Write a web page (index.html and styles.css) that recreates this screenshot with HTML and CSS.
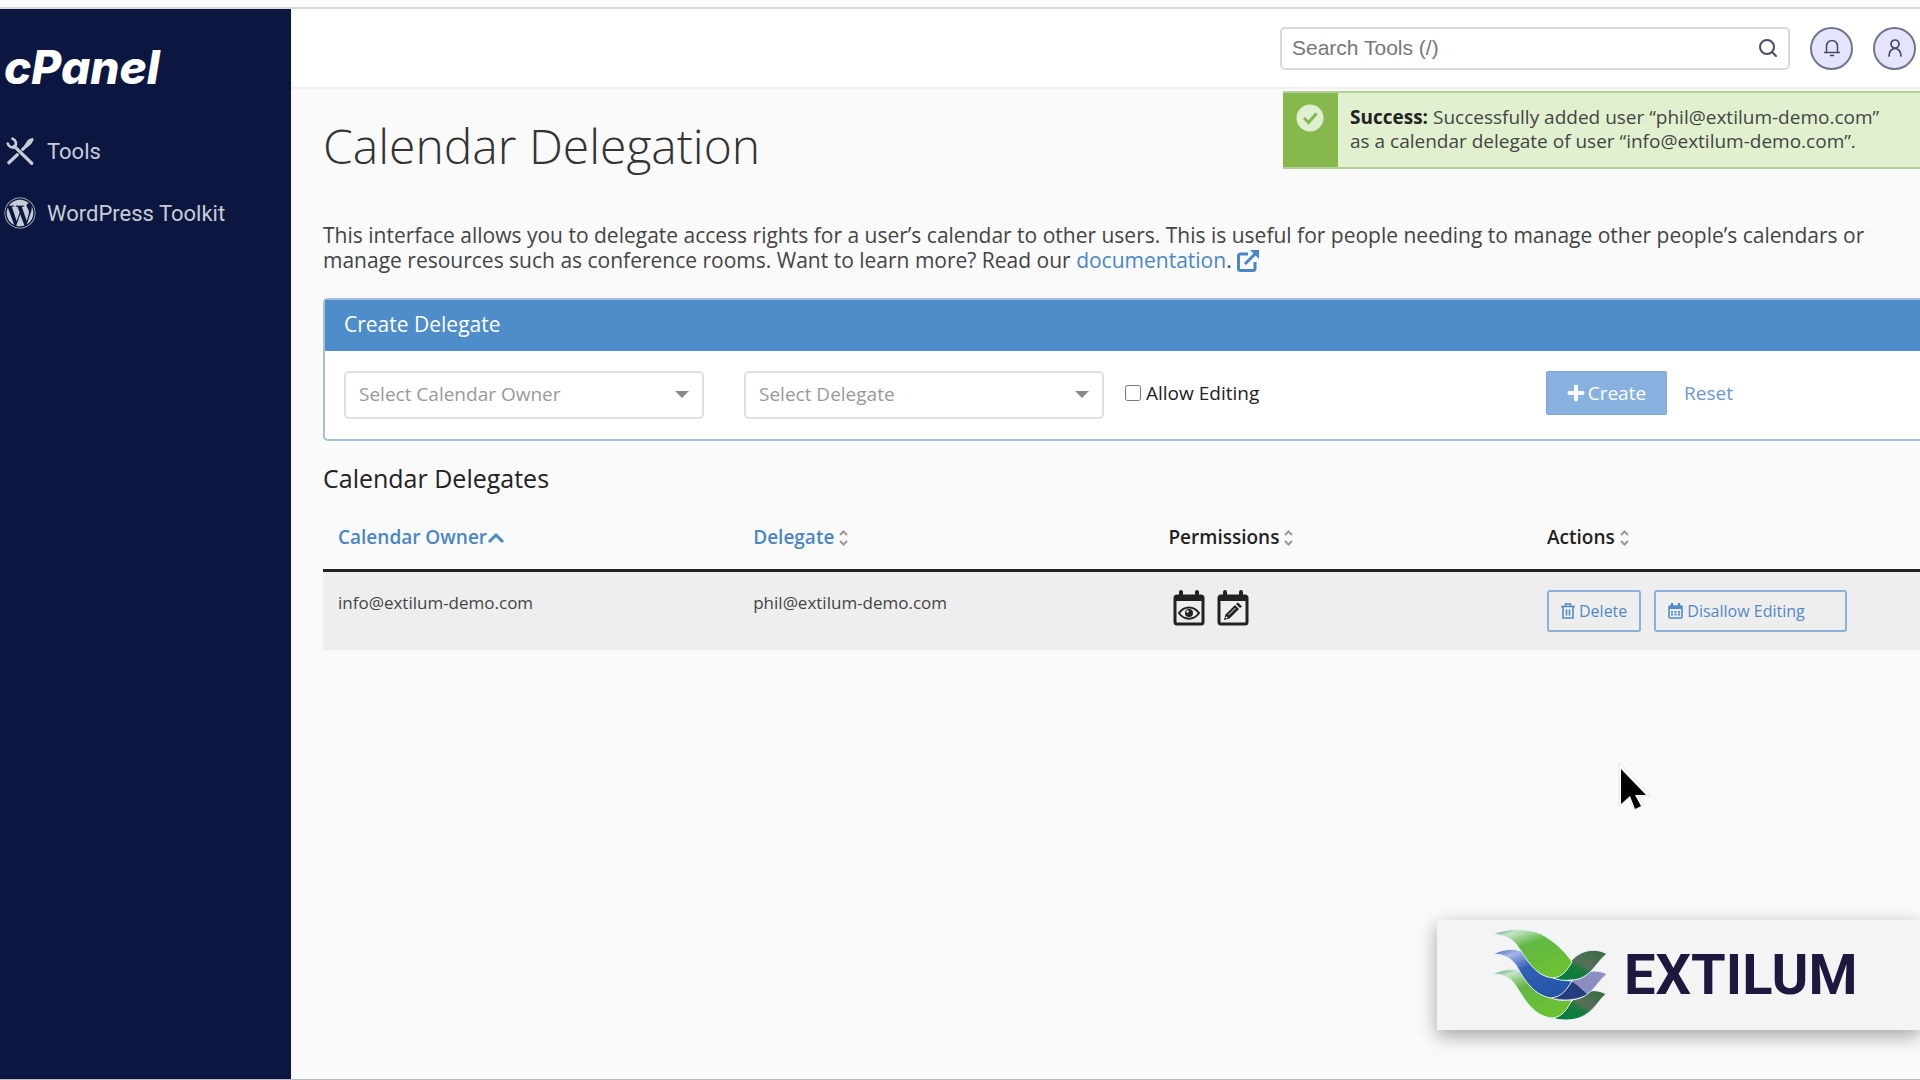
FILE: index.html
```html
<!DOCTYPE html>
<html lang="en">
  <head>
    <meta charset="utf-8" />
    <title>cPanel - Calendar Delegation</title>
    <link rel="stylesheet" href="styles.css">
  </head>

  <body>
    <div class="top-strip"></div>

    <div class="layout">
      <nav class="sidebar">
        <a href="#" class="logo">cPanel</a>
        <a href="#" class="nav-link">
          <svg class="nav-icon" viewBox="0 0 30 30" fill="none" stroke="currentColor" stroke-width="3" stroke-linecap="round">
            <path d="M9.500 10.500L26 26.500M4.500 26L12.500 18.500M17.500 13.500L21 10" />
            <path d="M8 3.500A5 5 0 0 1 10 11.500A5 5 0 0 1 3.500 8" stroke-width="2.500" />
            <path d="M20 9.500L23 5L26.500 3.500L27 4.500L25 8L21.500 11Z" fill="currentColor" stroke-width="1.500" />
          </svg>
          Tools
        </a>
        <a href="#" class="nav-link">
          <svg class="nav-icon" viewBox="0 0 512 512" fill="currentColor">
            <path d="M61.700 169.400l101.500 278C92.200 413 43.300 340.200 43.300 256c0-30.900 6.600-60.100 18.400-86.600zm337.900 75.900c0-26.300-9.400-44.500-17.500-58.700-10.800-17.500-20.900-32.400-20.900-49.900 0-19.600 14.800-37.800 35.700-37.800.9 0 1.800.1 2.800.2-37.900-34.700-88.300-55.900-143.700-55.900-74.300 0-139.700 38.100-177.800 95.900 5 .2 9.700.3 13.700.3 22.200 0 56.700-2.700 56.700-2.700 11.500-.7 12.800 16.200 1.400 17.500 0 0-11.500 1.300-24.300 2l77.500 230.400L249.800 247l-33.100-90.800c-11.500-.7-22.300-2-22.300-2-11.500-.7-10.100-18.200 1.300-17.500 0 0 35.100 2.700 56 2.700 22.200 0 56.700-2.700 56.700-2.700 11.500-.7 12.800 16.200 1.400 17.500 0 0-11.500 1.300-24.300 2l76.900 228.700 21.200-70.900c9-29.400 16-50.500 16-68.700zm-139.900 29.300l-63.800 185.500c19.100 5.600 39.200 8.700 60.100 8.700 24.800 0 48.500-4.300 70.600-12.100-.6-.9-1.100-1.900-1.500-2.900l-65.400-179.200zm183-120.700c.9 6.800 1.400 14 1.400 21.900 0 21.600-4 45.800-16.200 76.200l-65 187.900C426.200 403 468.700 334.500 468.700 256c0-37-9.400-71.800-26-102.100zM504 256c0 136.800-111.300 248-248 248C119.200 504 8 392.700 8 256 8 119.200 119.200 8 256 8c136.700 0 248 111.200 248 248zm-11.400 0c0-130.500-106.200-236.600-236.600-236.600C125.500 19.400 19.400 125.500 19.400 256S125.600 492.600 256 492.600c130.500 0 236.600-106.100 236.600-236.600z" />
          </svg>
          WordPress Toolkit
        </a>
      </nav>

      <div class="content">
        <header class="topbar">
          <div class="search-box">
            <input type="text" class="search-input" placeholder="Search Tools (/)" aria-label="Search Tools">
            <button type="button" class="search-button" aria-label="Search">
              <svg width="20" height="20" viewBox="0 0 20 20" fill="none" stroke="currentColor" stroke-width="2">
                <circle cx="9" cy="9" r="7" />
                <path d="M14 14L18 18" stroke-linecap="round" />
              </svg>
            </button>
          </div>
          <button type="button" class="round-button" aria-label="Notifications">
            <svg width="20" height="20" viewBox="0 0 20 20" fill="none" stroke="currentColor" stroke-width="1.500" stroke-linecap="round" stroke-linejoin="round">
              <path d="M2.500 14.500H17.500M4.500 14.500V8A5.500 5.500 0 0 1 15.500 8V14.500M8.500 17.500H11.500" />
            </svg>
          </button>
          <button type="button" class="round-button" aria-label="Account">
            <svg width="20" height="20" viewBox="0 0 20 20" fill="none" stroke="currentColor" stroke-width="1.700" stroke-linecap="round">
              <circle cx="10" cy="6" r="4" />
              <path d="M4 18C4 13 7 10.500 10 10.500S16 13 16 18" />
            </svg>
          </button>
        </header>

        <div class="alert" role="status">
          <div class="alert-icon">
            <svg width="28" height="28" viewBox="0 0 28 28">
              <circle cx="14" cy="14" r="13.500" fill="#dff0d0" />
              <path d="M8 14L12.500 18.500L20.500 9.500" fill="none" stroke="#86b84e" stroke-width="3" />
            </svg>
          </div>
          <div class="alert-text"><strong>Success:</strong> Successfully added user “phil@extilum-demo.com”<br>as a calendar delegate of user “info@extilum-demo.com”.</div>
        </div>

        <main class="main">
          <h1>Calendar Delegation</h1>
          <p class="intro">
            This interface allows you to delegate access rights for a user’s calendar to other users. This is useful for people needing to manage other people’s calendars or manage resources such as conference rooms. Want to learn more? Read our <a href="#">documentation</a>.
            <a href="#" aria-label="Open documentation"><svg class="external-icon" viewBox="0 0 22 22" fill="none" stroke="currentColor" stroke-width="3">
              <path d="M11 4H3.500A2 2 0 0 0 1.500 6V18.500A2 2 0 0 0 3.500 20.500H16A2 2 0 0 0 18 18.500V12M8 14L19 3" />
              <path d="M13 0H22V9Z" fill="currentColor" stroke="none" />
            </svg></a>
          </p>

          <section class="panel">
            <div class="panel-heading">Create Delegate</div>
            <form class="panel-body">
              <div class="select-wrap">
                <select aria-label="Calendar owner">
                  <option>Select Calendar Owner</option>
                </select>
              </div>
              <div class="select-wrap">
                <select aria-label="Delegate">
                  <option>Select Delegate</option>
                </select>
              </div>
              <div class="check-group">
                <input type="checkbox" id="allow-editing">
                <label for="allow-editing">Allow Editing</label>
              </div>
              <div class="form-buttons">
                <button type="button" class="btn-create">
                  <svg width="18" height="18" viewBox="0 0 18 18" fill="none" stroke="currentColor" stroke-width="4" stroke-linecap="round">
                    <path d="M9 2.500V15.500M2.500 9H15.500" />
                  </svg>
                  Create
                </button>
                <button type="reset" class="btn-reset">Reset</button>
              </div>
            </form>
          </section>

          <h2>Calendar Delegates</h2>
          <table class="delegates">
            <thead>
              <tr>
                <th class="col-owner"><a href="#">Calendar Owner<svg class="sort-asc" viewBox="0 0 18 12" fill="none" stroke="currentColor" stroke-width="3"><path d="M2 10L9 3L16 10" /></svg></a></th>
                <th class="col-delegate"><a href="#">Delegate</a><svg class="sort" viewBox="0 0 9 16"><path d="M1 5L4.500 1.500L8 5M1 11L4.500 14.500L8 11" /></svg></th>
                <th>Permissions<svg class="sort" viewBox="0 0 9 16"><path d="M1 5L4.500 1.500L8 5M1 11L4.500 14.500L8 11" /></svg></th>
                <th class="col-actions">Actions<svg class="sort" viewBox="0 0 9 16"><path d="M1 5L4.500 1.500L8 5M1 11L4.500 14.500L8 11" /></svg></th>
              </tr>
            </thead>
            <tbody>
              <tr>
                <td>info@extilum-demo.com</td>
                <td>phil@extilum-demo.com</td>
                <td>
                  <div class="permissions">
                    <svg width="32" height="36" viewBox="0 0 32 36">
                      <path d="M8 2V7M24 2V7" stroke="#222" stroke-width="4" stroke-linecap="round" />
                      <rect x="2" y="6" width="28" height="28" rx="2" fill="none" stroke="#222" stroke-width="3" />
                      <path d="M2 5H30V11H2Z" fill="#222" />
                      <path d="M6 23C11 15.500 21 15.500 26 23C21 30.500 11 30.500 6 23Z" fill="none" stroke="#222" stroke-width="2" />
                      <circle cx="16" cy="23" r="4" fill="#222" />
                      <circle cx="14.500" cy="21.500" r="1.200" fill="#eee" />
                    </svg>
                    <svg width="32" height="36" viewBox="0 0 32 36">
                      <path d="M8 2V7M24 2V7" stroke="#222" stroke-width="4" stroke-linecap="round" />
                      <rect x="2" y="6" width="28" height="28" rx="2" fill="none" stroke="#222" stroke-width="3" />
                      <path d="M2 5H30V11H2Z" fill="#222" />
                      <path d="M7 30L8.500 24.500L18 15L22 19L12.500 28.500Z" fill="#222" />
                      <path d="M19 14L21 12.500L25 16.500L23 18Z" fill="#222" />
                      <path d="M11.500 25L18.500 18" stroke="#eee" stroke-width="1" />
                      <circle cx="9.500" cy="27.500" r="1" fill="#eee" />
                    </svg>
                  </div>
                </td>
                <td>
                  <div class="actions">
                    <button type="button" class="btn-outline">
                      <svg width="14" height="16" viewBox="0 0 14 16" fill="none" stroke="currentColor" stroke-width="1.600">
                        <path d="M0 3.500H14M4.500 3V1H9.500V3M2 4V15H12V4M5.500 6.500V12.500M8.500 6.500V12.500" />
                      </svg>
                      Delete
                    </button>
                    <button type="button" class="btn-outline btn-wide">
                      <svg width="15" height="16" viewBox="0 0 15 16" fill="none" stroke="currentColor" stroke-width="1.600">
                        <path d="M4 0V4M11 0V4" stroke-width="2.200" />
                        <rect x="1" y="3" width="13" height="12" rx="1" />
                        <path d="M1 4.500H14" stroke-width="3" />
                        <path d="M3 8.800H12M3 11.500H12" stroke-width="1.800" stroke-dasharray="2 1.500" />
                      </svg>
                      Disallow Editing
                    </button>
                  </div>
                </td>
              </tr>
            </tbody>
          </table>
        </main>
      </div>
    </div>

    <div class="brand">
      <svg width="114" height="92" viewBox="0 0 114 92">
        <defs>
          <linearGradient id="leaf" x1="0" y1="0" x2="0.600" y2="1">
            <stop offset="0" stop-color="#4f9568" />
            <stop offset="0.160" stop-color="#c5e4c8" />
            <stop offset="0.420" stop-color="#62b845" />
            <stop offset="1" stop-color="#6cc230" />
          </linearGradient>
          <linearGradient id="wave" x1="0" y1="0" x2="0.700" y2="1">
            <stop offset="0" stop-color="#3d62b0" />
            <stop offset="0.180" stop-color="#a5b6ea" />
            <stop offset="0.450" stop-color="#315fb5" />
            <stop offset="1" stop-color="#2455a6" />
          </linearGradient>
          <linearGradient id="leaf-dark" x1="0" y1="1" x2="1" y2="0">
            <stop offset="0" stop-color="#008040" />
            <stop offset="0.420" stop-color="#187a3c" />
            <stop offset="0.560" stop-color="#58705a" />
            <stop offset="1" stop-color="#346a3c" />
          </linearGradient>
        </defs>
        <g stroke="#e6f2f4" stroke-width="1">
          <path d="M59 89C70 86 72 78 79 72C89 61 103 59 113 65C104 72 98 91 73 91C67 91 63 90 59 89Z" fill="url(#leaf-dark)" />
          <path d="M0 45C12 39 26 39 38 46C52 55 60 71 79 71C74 80 70 88 59 89C38 87 29 65 21 54C16 48 9 45 0 45Z" fill="url(#leaf)" />
          <path d="M58 69C70 66 72 57 79 52C89 41 103 40 114 45C104 52 98 71 76 71C69 72 63 71 58 69Z" fill="#8c8dc1" />
          <path d="M59 69C70 66 73 58 79 53C84 55 89 61 94 65C84 71 71 71 59 69Z" fill="#253d7c" stroke="none" />
          <path d="M0 25C12 19 25 19 35 25C46 38 55 51 79 52C74 60 69 68 58 69C39 66 30 48 23 36C17 28 9 25 0 25Z" fill="url(#wave)" />
          <path d="M60 49C71 46 73 37 79 31C89 20 104 19 114 25C104 31 98 51 78 51C71 52 65 51 60 49Z" fill="url(#leaf-dark)" />
          <path d="M0 5C15 -1 34 -1 48 5C61 12 72 22 79 33C74 41 70 48 60 49C40 47 32 26 23 15C17 8 9 6 0 5Z" fill="url(#leaf)" />
        </g>
      </svg>
      <span class="brand-name">EXTILUM</span>
    </div>

    <svg class="cursor" width="36" height="52" viewBox="0 0 36 52">
      <path d="M2 2V47L12 38L17 50L27 45L21 36H34Z" fill="#fff" stroke="#e4e4e4" stroke-width="1" />
      <path d="M4 9V44L13 36L18 49L24 46L18 35H29Z" fill="#000" />
    </svg>
  </body>
</html>
```

FILE: styles.css
```css
* {
  box-sizing: border-box;
}

body {
  margin: 0;
  min-height: 100vh;
  display: flex;
  flex-direction: column;
  overflow-x: hidden;
  font-family: "Open Sans", sans-serif;
  font-size: 21px;
  line-height: 25px;
  color: #444;
  background-color: #fafafa;
  border-bottom: 1px solid #bbb;
}

a {
  color: #4a86c6;
  text-decoration: none;
}

button,
input,
select {
  font-family: inherit;
}

.top-strip {
  height: 9px;
  background-color: #fafbfa;
  border-bottom: 2px solid #d9dbdc;
}

.layout {
  flex: 1;
  display: flex;
}

.sidebar {
  flex: 0 0 291px;
  background-color: #0b1740;
}

.logo {
  display: block;
  padding: 32px 0 0 4px;
  margin-bottom: 40px;
  font-family: Inter, sans-serif;
  font-size: 46px;
  font-weight: 800;
  font-style: italic;
  line-height: 52px;
  color: #fff;
}

.nav-link {
  display: flex;
  align-items: center;
  gap: 11px;
  height: 36px;
  margin-bottom: 26px;
  padding-left: 4px;
  font-family: Roboto, sans-serif;
  font-size: 22px;
  font-weight: 400;
  color: #c8ccd6;
}

.nav-icon {
  width: 32px;
  height: 32px;
}

.content {
  flex: 1;
  min-width: 0;
  position: relative;
}

.topbar {
  display: flex;
  align-items: center;
  justify-content: flex-end;
  gap: 20px;
  height: 80px;
  padding-right: 4px;
  background-color: #fff;
  border-bottom: 2px solid #f0f0f0;
}

.search-box {
  display: flex;
  align-items: center;
  width: 510px;
  height: 43px;
  border: 2px solid #d8d9da;
  border-radius: 5px;
}

.search-input {
  flex: 1;
  padding: 0 10px;
  border: 0;
  outline: 0;
  background: none;
  font-family: "Liberation Sans", sans-serif;
  font-size: 21px;
}

.search-input::placeholder {
  color: #777;
}

.search-button {
  display: flex;
  padding: 0 10px;
  border: 0;
  background: none;
  color: #4a4a66;
}

.round-button {
  display: flex;
  align-items: center;
  justify-content: center;
  width: 43px;
  height: 43px;
  padding: 0;
  border: 2px solid #74748e;
  border-radius: 50%;
  background-color: #e4e4fa;
  color: #47476a;
}

/* notice floats over the page heading */
.alert {
  position: absolute;
  top: 82px;
  right: 0;
  display: flex;
  width: 637px;
  height: 78px;
  background-color: #e1f1d0;
  border: 2px solid #b3cf97;
  border-right: 0;
  border-left: 0;
}

.alert-icon {
  width: 55px;
  padding: 11px 13px;
  background-color: #86b84e;
}

.alert-text {
  padding: 12px;
  font-size: 19px;
  line-height: 24px;
}

.alert-text strong {
  color: #222;
}

.main {
  padding: 24px 0 0 32px;
}

h1 {
  margin: 0 0 44px;
  font-size: 48px;
  font-weight: 300;
  line-height: 66px;
  color: #333;
}

.intro {
  margin: 0 0 25px;
}

.external-icon {
  width: 22px;
  height: 22px;
  vertical-align: -4px;
}

.panel {
  border: 2px solid #a3c1dd;
  border-right: 0;
  border-radius: 5px 0 0 5px;
  background-color: #fff;
}

.panel-heading {
  padding: 12px 19px 14px;
  background-color: #4f8cca;
  color: #fff;
}

.panel-body {
  display: flex;
  gap: 40px;
  padding: 20px 19px;
}

.select-wrap {
  position: relative;
  width: 360px;
}

.select-wrap::after {
  content: "";
  position: absolute;
  top: 20px;
  right: 15px;
  border: 7px solid transparent;
  border-top-color: #888;
  border-bottom: 0;
}

.select-wrap select {
  width: 100%;
  height: 48px;
  padding: 0 13px 2px;
  appearance: none;
  border: 2px solid #dedede;
  border-radius: 5px;
  background-color: #fff;
  font-size: 19px;
  color: #999;
}

.check-group {
  display: flex;
  align-items: center;
  gap: 5px;
  height: 44px;
  margin-left: -19px;
  font-size: 19px;
  color: #222;
}

.check-group input {
  width: 16px;
  height: 16px;
  margin: 0;
}

.form-buttons {
  display: flex;
  align-items: center;
  height: 44px;
  margin-left: auto;
  margin-right: 151px;
}

.btn-create {
  display: flex;
  align-items: center;
  gap: 3px;
  height: 44px;
  padding: 0 20px;
  border: 1px solid #7fa6d6;
  border-radius: 2px;
  background-color: #88b1e0;
  font-size: 19px;
  color: #fff;
}

.btn-reset {
  padding: 0 17px;
  border: 0;
  background: none;
  font-size: 19px;
  color: #6d98cc;
}

h2 {
  margin: 21px 0 22px;
  font-size: 25px;
  font-weight: 400;
  line-height: 33px;
  color: #222;
}

.delegates {
  width: 100%;
  table-layout: fixed;
  border-collapse: collapse;
  font-size: 17px;
}

.delegates th {
  padding: 8px 15px 19px;
  border-bottom: 3px solid #222;
  text-align: left;
  font-size: 19px;
  font-weight: 600;
  color: #222;
}

.delegates td {
  height: 78px;
  padding: 18px 15px;
  vertical-align: top;
  background-color: #eee;
}

.col-owner,
.col-delegate {
  width: 26%;
}

.col-actions {
  width: 388px;
}

.sort-asc {
  width: 18px;
  height: 12px;
}

.sort {
  width: 9px;
  height: 16px;
  margin-left: 5px;
  vertical-align: -2px;
  fill: none;
  stroke: #999;
  stroke-width: 2;
}

.permissions {
  display: flex;
  gap: 12px;
  padding-left: 5px;
}

.actions {
  display: flex;
  gap: 13px;
}

.btn-outline {
  display: flex;
  align-items: center;
  gap: 4px;
  height: 42px;
  padding: 0 12px;
  border: 2px solid #8bb0da;
  border-radius: 3px;
  background: none;
  font-size: 16px;
  color: #5289c7;
}

.btn-wide {
  width: 193px;
}

.brand {
  position: fixed;
  right: 0;
  bottom: 50px;
  display: flex;
  align-items: center;
  gap: 17px;
  width: 483px;
  height: 110px;
  padding-left: 56px;
  background-color: #f4f4f4;
  box-shadow: 0 6px 18px rgba(0, 0, 0, 0.35);
}

.brand-name {
  font-family: Roboto, sans-serif;
  font-size: 56px;
  font-weight: 700;
  line-height: 60px;
  color: #1e183f;
}

.cursor {
  position: absolute;
  top: 760px;
  left: 1617px;
}
```
